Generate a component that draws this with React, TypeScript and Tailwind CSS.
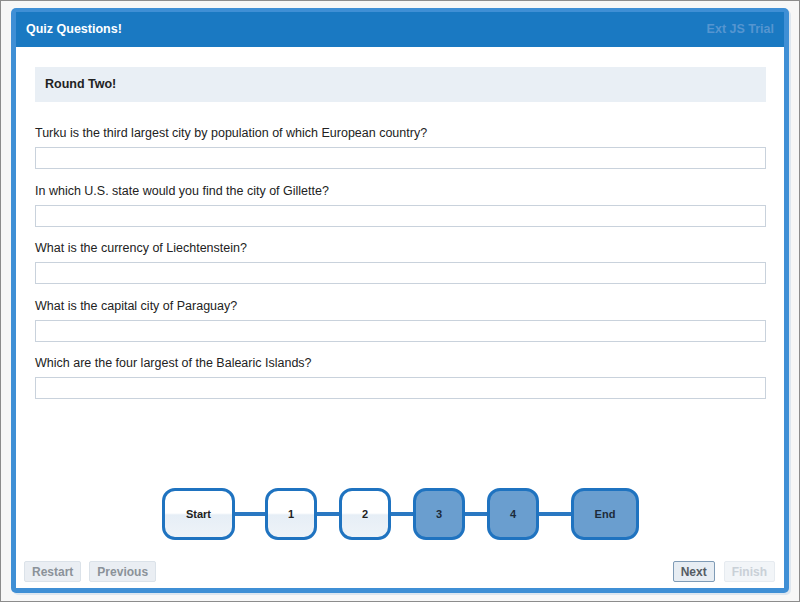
const QUESTIONS = [
  "Turku is the third largest city by population of which European country?",
  "In which U.S. state would you find the city of Gillette?",
  "What is the currency of Liechtenstein?",
  "What is the capital city of Paraguay?",
  "Which are the four largest of the Balearic Islands?",
];

type Step = { label: string; w: string; done: boolean };

const STEPS: Step[] = [
  { label: "Start", w: "w-[73px]", done: false },
  { label: "1", w: "w-[52px]", done: false },
  { label: "2", w: "w-[52px]", done: false },
  { label: "3", w: "w-[52px]", done: true },
  { label: "4", w: "w-[52px]", done: true },
  { label: "End", w: "w-[68px]", done: true },
];

const LINKS = ["w-[30px]", "w-[22px]", "w-[22px]", "w-[22px]", "w-[32px]"];

function StepNode({ s }: { s: Step }) {
  return (
    <div
      className={`${s.w} h-[52px] rounded-[13px] border-[3px] border-[#1f73c0] flex items-center justify-center text-[11px] font-bold overflow-hidden ${
        s.done ? "bg-[#6a9ecf] text-[#1d2b3a]" : "bg-[linear-gradient(#ffffff_0%,#ffffff_48%,#e6eef6_52%,#eef3f8_100%)] text-[#222]"
      }`}
    >
      {s.label}
    </div>
  );
}

function Btn({ label, kind }: { label: string; kind: "off" | "on" | "faint" }) {
  const cls =
    kind === "on"
      ? "border-[#7f9bb6] bg-[#e7edf3] text-[#555c63]"
      : kind === "faint"
      ? "border-[#e6ebf0] bg-[#f2f5f8] text-[#c9d0d7]"
      : "border-[#dbe2e9] bg-[#eaeef3] text-[#8b9299]";
  return (
    <button className={`h-[21px] px-[7px] rounded-[2px] border text-[12px] font-bold leading-none ${cls}`}>
      {label}
    </button>
  );
}

export default function App() {
  return (
    <div
      className="w-[800px] h-[602px] bg-[#f7f7f7] border border-[#8c8c8c] pt-[7px] pl-[10px] pr-[10px] pb-[8px]"
      style={{ fontFamily: '"Liberation Sans", Arial, sans-serif' }}
    >
      <div className="h-full bg-[#3f8fd5] rounded-[5px] pt-[4px] px-[5px] pb-[5px] flex flex-col shadow-[2px_2px_0_#dde6ef]">
        <div className="h-[35px] shrink-0 bg-[#1a79c2] flex items-center justify-between px-[10px]">
          <span className="text-white text-[12.5px] font-bold">Quiz Questions!</span>
          <span className="text-[#5595d0] text-[12.5px] font-bold">Ext JS Trial</span>
        </div>
        <div className="flex-1 bg-white flex flex-col pl-[19px] pr-[18px] pt-[20px] pb-[6px]">
          <div className="h-[35px] bg-[#e9eff5] flex items-center px-[10px] text-[12.5px] font-bold text-[#222]">
            Round Two!
          </div>
          <div className="flex flex-col gap-[13.5px] mt-[23px]">
            {QUESTIONS.map(q => (
              <div key={q} className="flex flex-col">
                <label className="h-[16px] leading-[16px] text-[12.5px] text-[#222]">{q}</label>
                <input className="mt-[6px] h-[22px] border border-[#c9d2dc] bg-white outline-none" />
              </div>
            ))}
          </div>
          <div className="flex-1" />
          <div className="flex items-center justify-center">
            {STEPS.map((s, i) => (
              <div key={s.label} className="flex items-center">
                <StepNode s={s} />
                {i < LINKS.length && <div className={`${LINKS[i]} h-[4px] bg-[#2a78c2]`} />}
              </div>
            ))}
          </div>
          <div className="mt-[21px] flex items-center justify-between -ml-[11px] -mr-[9px]">
            <div className="flex gap-[8px]">
              <Btn label="Restart" kind="off" />
              <Btn label="Previous" kind="off" />
            </div>
            <div className="flex gap-[9px]">
              <Btn label="Next" kind="on" />
              <Btn label="Finish" kind="faint" />
            </div>
          </div>
        </div>
      </div>
    </div>
  );
}
